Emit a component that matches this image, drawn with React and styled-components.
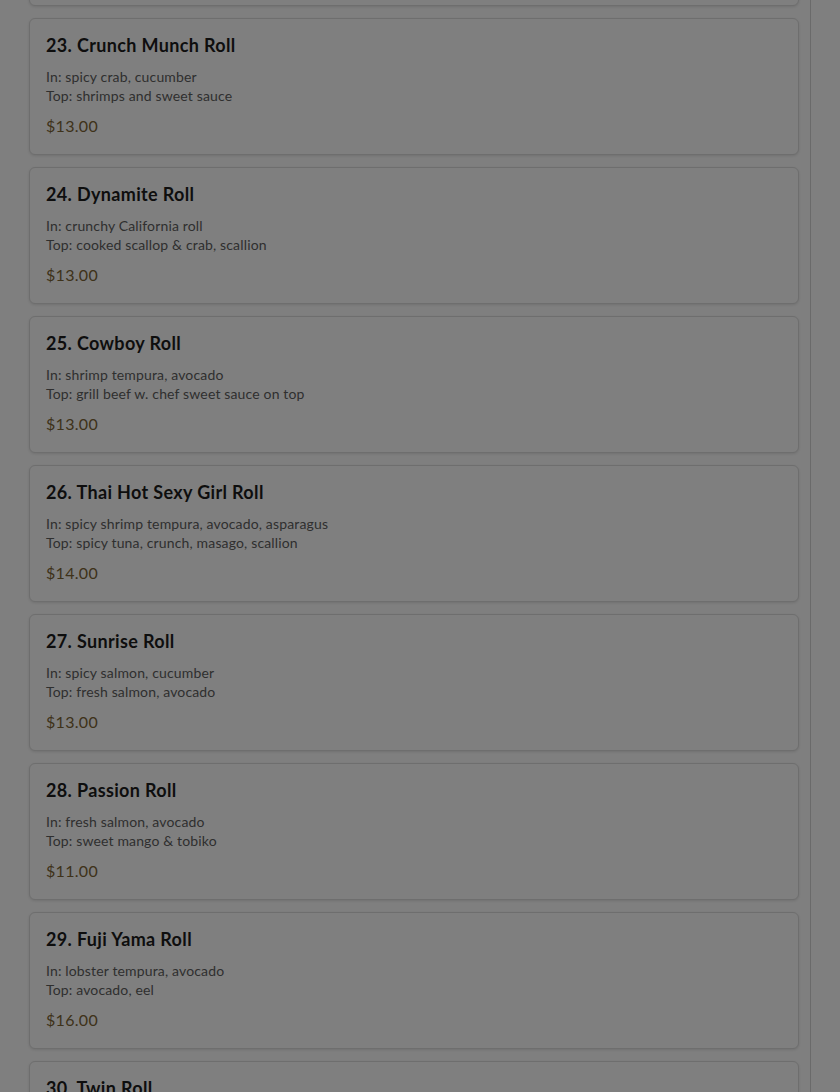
import React from "react";
import styled, { createGlobalStyle } from "styled-components";

const Global = createGlobalStyle`
  html, body { margin: 0; padding: 0; overflow: hidden; background: #ffffff; }
  body { font-family: Lato, "Noto Sans", "Liberation Sans", sans-serif; }
`;

const Page = styled.div`
  width: 811px;
  box-sizing: border-box;
  padding: 0 11px 0 29px;
  border-right: 1px solid #d4d4d4;
  min-height: 1092px;
  background: #ffffff;
`;

const List = styled.div`
  display: flex;
  flex-direction: column;
  gap: 12px;
  margin-top: -131px;
`;

const Card = styled.div`
  border: 1px solid #dcdcdc;
  border-radius: 6px;
  padding: 16px 16px 17px;
  background: #ffffff;
  box-shadow: 0 1px 3px rgba(0, 0, 0, 0.12);
`;

const Title = styled.h3`
  margin: 0 0 12px;
  font-size: 18px;
  line-height: 20px;
  font-weight: 700;
  letter-spacing: 0.35px;
  color: #1c1c1c;
`;

const Desc = styled.p`
  margin: 0;
  font-size: 14px;
  line-height: 19px;
  letter-spacing: 0.15px;
  color: #5e5e5e;
`;

const Price = styled.div`
  margin-top: 10px;
  font-size: 16px;
  line-height: 22px;
  letter-spacing: 0.3px;
  color: #7d6535;
`;

const Backdrop = styled.div`
  position: fixed;
  inset: 0;
  background: rgba(0, 0, 0, 0.5);
`;

const items = [
  { n: 22, name: "Rainbow Roll", ins: "crab, cucumber, avocado", top: "assorted fish", price: "$13.00" },
  { n: 23, name: "Crunch Munch Roll", ins: "spicy crab, cucumber", top: "shrimps and sweet sauce", price: "$13.00" },
  { n: 24, name: "Dynamite Roll", ins: "crunchy California roll", top: "cooked scallop & crab, scallion", price: "$13.00" },
  { n: 25, name: "Cowboy Roll", ins: "shrimp tempura, avocado", top: "grill beef w. chef sweet sauce on top", price: "$13.00" },
  { n: 26, name: "Thai Hot Sexy Girl Roll", ins: "spicy shrimp tempura, avocado, asparagus", top: "spicy tuna, crunch, masago, scallion", price: "$14.00" },
  { n: 27, name: "Sunrise Roll", ins: "spicy salmon, cucumber", top: "fresh salmon, avocado", price: "$13.00" },
  { n: 28, name: "Passion Roll", ins: "fresh salmon, avocado", top: "sweet mango & tobiko", price: "$11.00" },
  { n: 29, name: "Fuji Yama Roll", ins: "lobster tempura, avocado", top: "avocado, eel", price: "$16.00" },
  { n: 30, name: "Twin Roll", ins: "shrimp tempura, cucumber", top: "spicy tuna, avocado", price: "$14.00" },
];

export default function App() {
  return (
    <>
      <Global />
      <Page>
        <List>
          {items.map((it) => (
            <Card key={it.n}>
              <Title>
                {it.n}. {it.name}
              </Title>
              <Desc>
                In: {it.ins}
                <br />
                Top: {it.top}
              </Desc>
              <Price>{it.price}</Price>
            </Card>
          ))}
        </List>
      </Page>
      <Backdrop />
    </>
  );
}
